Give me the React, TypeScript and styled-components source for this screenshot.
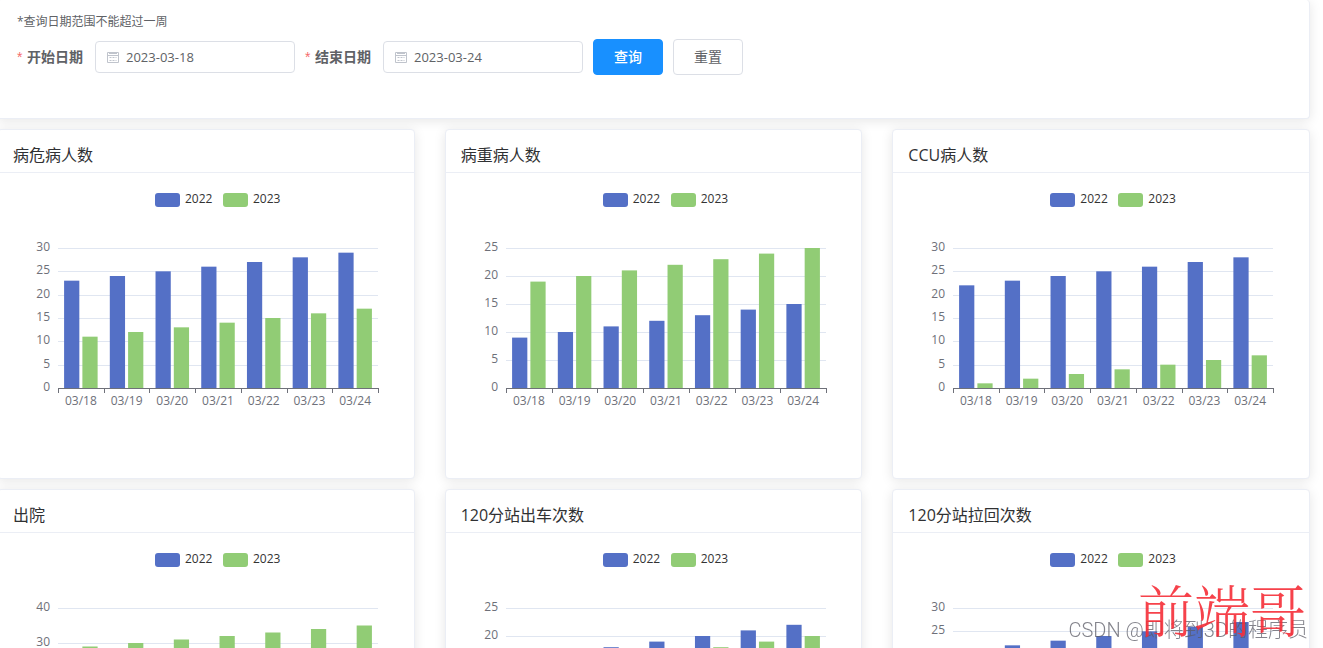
import React from "react";
import styled, { createGlobalStyle } from "styled-components";

const BLUE = "#5470c6";
const GREEN = "#91cc75";

const GlobalStyle = createGlobalStyle`
  * { box-sizing: border-box; }
  body {
    margin: 0;
    background: #fff;
    overflow: hidden;
    font-family: "Open Sans", "Noto Sans CJK SC", sans-serif;
    font-size: 14px;
    color: #606266;
  }
`;

const Page = styled.main`
  height: 100vh;
  overflow: hidden;
`;

const Content = styled.div`
  display: flex;
  flex-direction: column;
  gap: 10px;
  margin: 0 13px 0 -3px;
`;

const Surface = styled.section`
  background: #fff;
  border: 1px solid #ebeef5;
  border-radius: 4px;
  box-shadow: 0 2px 12px rgba(0, 0, 0, 0.1);
`;

const FilterPanel = styled(Surface)`
  border-top: 0;
  padding: 12px 19px 43px;
`;

const Hint = styled.p`
  margin: 0 0 7px;
  font-size: 12px;
  line-height: 20px;
`;

const FilterForm = styled.form`
  display: flex;
  align-items: center;
  gap: 10px;
`;

const Field = styled.div`
  display: flex;
  align-items: center;
`;

const FieldLabel = styled.label`
  display: flex;
  padding-right: 12px;
  font-weight: 700;
  line-height: 36px;
`;

const Required = styled.span`
  width: 6px;
  margin-right: 4px;
  color: #f56c6c;
  font-family: "Liberation Sans", sans-serif;
  font-weight: 400;
`;

const DateBox = styled.div`
  display: flex;
  align-items: center;
  gap: 7px;
  width: 200px;
  height: 32px;
  padding: 0 11px;
  border: 1px solid #dcdfe6;
  border-radius: 4px;
`;

const DateInput = styled.input`
  flex: 1;
  min-width: 0;
  padding: 0;
  border: 0;
  outline: none;
  background: transparent;
  font-family: inherit;
  font-size: 13px;
  line-height: 20px;
  color: #606266;
`;

const Button = styled.button<{ $primary?: boolean }>`
  width: 70px;
  height: 36px;
  padding: 0;
  border: 1px solid ${(p) => (p.$primary ? "#1890ff" : "#dcdfe6")};
  border-radius: 4px;
  background: ${(p) => (p.$primary ? "#1890ff" : "#fff")};
  color: ${(p) => (p.$primary ? "#fff" : "#606266")};
  font-family: inherit;
  font-size: 14px;
  line-height: 20px;
  font-weight: ${(p) => (p.$primary ? 500 : 400)};
  cursor: pointer;
`;

const CardGrid = styled.div`
  display: grid;
  grid-template-columns: repeat(3, minmax(0, 1fr));
  gap: 10px 30px;
`;

const Card = styled(Surface)`
  display: flex;
  flex-direction: column;
`;

const CardTitle = styled.h2`
  margin: 0;
  padding: 13px 15px 5px;
  border-bottom: 1px solid #ebeef5;
  font-size: 16px;
  font-weight: 400;
  line-height: 24px;
  color: #303133;
`;

const CardBody = styled.div`
  padding: 15px 20px 30px;
`;

const ChartBox = styled.figure`
  width: 400px;
  margin: 0;
  padding-top: 5px;
`;

const Legend = styled.figcaption`
  display: flex;
  justify-content: center;
  gap: 10px;
  height: 14px;
`;

const LegendItem = styled.span`
  display: flex;
  gap: 5px;
  width: 58px;
  font-size: 12px;
  line-height: 12px;
  color: #333;
`;

const Swatch = styled.i<{ $color: string }>`
  width: 25px;
  height: 14px;
  border-radius: 3px;
  background: ${(p) => p.$color};
`;

const Plot = styled.svg`
  display: block;
  overflow: visible;
  font-size: 12px;
  fill: #6e7079;
`;

const Watermark = styled.div`
  position: fixed;
  right: 15px;
  bottom: 6px;
  font-family: Roboto, "Noto Sans CJK SC", sans-serif;
  font-size: 20px;
  font-weight: 300;
  line-height: 24px;
  color: rgba(90, 90, 100, 0.75);
  white-space: nowrap;
  pointer-events: none;
`;

const RedMark = styled(Watermark)`
  right: 17px;
  bottom: 8px;
  font-family: "Noto Serif CJK SC", "Noto Sans CJK SC", serif;
  font-size: 56px;
  line-height: 64px;
  color: rgba(245, 45, 55, 0.9);
`;

const DAYS = ["03/18", "03/19", "03/20", "03/21", "03/22", "03/23", "03/24"];

interface ChartData {
  title: string;
  max: number;
  step: number;
  y2022: number[];
  y2023: number[];
}

const run = (start: number) => DAYS.map((_, i) => start + i);

const CHARTS: ChartData[] = [
  { title: "病危病人数", max: 30, step: 5, y2022: run(23), y2023: run(11) },
  { title: "病重病人数", max: 25, step: 5, y2022: run(9), y2023: run(19) },
  { title: "CCU病人数", max: 30, step: 5, y2022: run(22), y2023: run(1) },
  { title: "出院", max: 40, step: 10, y2022: run(15), y2023: run(29) },
  { title: "120分站出车次数", max: 25, step: 5, y2022: run(16), y2023: run(14) },
  { title: "120分站拉回次数", max: 30, step: 5, y2022: run(21), y2023: run(1) },
];

const LEFT = 40;
const TOP = 41;
const WIDTH = 320;
const HEIGHT = 140;
const BASE = TOP + HEIGHT;
const BAND = WIDTH / DAYS.length;
const BAR = BAND / 3;
const BAR_GAP = BAND / 15;
const INSET = (BAND - 2 * BAR - BAR_GAP) / 2;

function BarChart({ data }: { data: ChartData }) {
  const scale = HEIGHT / data.max;
  const ticks = Array.from({ length: data.max / data.step + 1 }, (_, i) => i * data.step);
  return (
    <ChartBox>
      <Legend>
        <LegendItem><Swatch $color={BLUE} />2022</LegendItem>
        <LegendItem><Swatch $color={GREEN} />2023</LegendItem>
      </Legend>
      <Plot width="400" height="241" role="img" aria-label={data.title}>
        {ticks.map((t) => {
          const y = Math.round(BASE - t * scale);
          return (
            <g key={t}>
              {t > 0 && <rect x={LEFT} y={y} width={WIDTH} height="1" fill="#e0e6f1" />}
              <text x={LEFT - 8} y={y + 3} textAnchor="end">{t}</text>
            </g>
          );
        })}
        {DAYS.map((day, i) => {
          const x = LEFT + i * BAND + INSET;
          const a = data.y2022[i] * scale;
          const b = data.y2023[i] * scale;
          return (
            <g key={day}>
              <rect x={x} y={BASE - a} width={BAR} height={a} fill={BLUE} />
              <rect x={x + BAR + BAR_GAP} y={BASE - b} width={BAR} height={b} fill={GREEN} />
              <text x={LEFT + (i + 0.5) * BAND} y={BASE + 17} textAnchor="middle">{day}</text>
            </g>
          );
        })}
        <rect x={LEFT} y={BASE} width={WIDTH + 1} height="1" />
        {[...DAYS, "end"].map((key, i) => (
          <rect key={key} x={Math.round(LEFT + i * BAND)} y={BASE} width="1" height="5" shapeRendering="crispEdges" />
        ))}
      </Plot>
    </ChartBox>
  );
}

function CalendarIcon() {
  return (
    <svg width="12" height="12" viewBox="0 0 12 12" fill="none" stroke="#c0c4cc" aria-hidden="true">
      <path d="M.5 1.5h11v10H.5zM.5 4.5h11M2 2.5h8" />
      <path d="M2.5 6.5h7M2.5 9.5h7" strokeDasharray="2 1" />
    </svg>
  );
}

function DateField({ id, label, value }: { id: string; label: string; value: string }) {
  return (
    <Field>
      <FieldLabel htmlFor={id}><Required>*</Required>{label}</FieldLabel>
      <DateBox>
        <CalendarIcon />
        <DateInput id={id} type="text" defaultValue={value} />
      </DateBox>
    </Field>
  );
}

export default function App() {
  return (
    <Page>
      <GlobalStyle />
      <Content>
        <FilterPanel>
          <Hint>*查询日期范围不能超过一周</Hint>
          <FilterForm onSubmit={(e) => e.preventDefault()}>
            <DateField id="start" label="开始日期" value="2023-03-18" />
            <DateField id="end" label="结束日期" value="2023-03-24" />
            <Button type="submit" $primary>查询</Button>
            <Button type="reset">重置</Button>
          </FilterForm>
        </FilterPanel>
        <CardGrid>
          {CHARTS.map((c) => (
            <Card key={c.title}>
              <CardTitle>{c.title}</CardTitle>
              <CardBody><BarChart data={c} /></CardBody>
            </Card>
          ))}
        </CardGrid>
      </Content>
      <Watermark>CSDN @即将到3D的程序员</Watermark>
      <RedMark>前端哥</RedMark>
    </Page>
  );
}
